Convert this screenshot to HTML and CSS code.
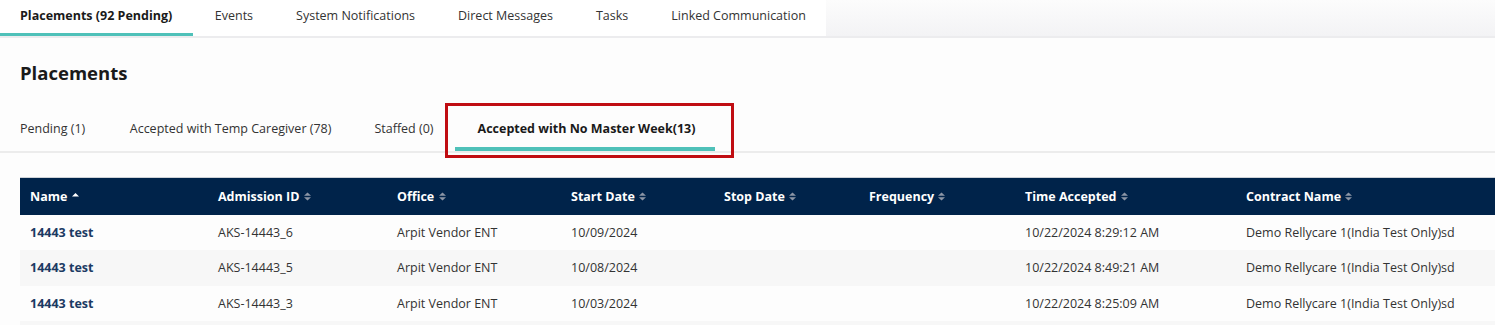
FILE: index.html
```html
<!DOCTYPE html>
<html>
<head>
<meta charset="utf-8">
<link rel="stylesheet" href="styles.css">
</head>
<body>
<div class="topbar">
  <nav class="toptabs">
    <a class="toptab active">Placements (92 Pending)</a>
    <a class="toptab">Events</a>
    <a class="toptab">System Notifications</a>
    <a class="toptab">Direct Messages</a>
    <a class="toptab">Tasks</a>
    <a class="toptab">Linked Communication</a>
  </nav>
  <div class="topfill"></div>
</div>
<main class="content">
  <h1 class="title">Placements</h1>
  <nav class="subtabs">
    <a class="subtab">Pending (1)</a>
    <a class="subtab">Accepted with Temp Caregiver (78)</a>
    <a class="subtab">Staffed (0)</a>
    <a class="subtab active">Accepted with No Master Week(13)</a>
  </nav>
  <table class="grid">
    <colgroup>
      <col style="width:188px"><col style="width:179px"><col style="width:174px"><col style="width:153px"><col style="width:145px"><col style="width:156px"><col style="width:221px"><col>
    </colgroup>
    <thead>
      <tr>
        <th>Name <span class="sort"><svg width="7" height="9" viewBox="0 0 7 9"><path d="M0 4.5 L3.5 1 L7 4.5 Z" fill="#fff"/></svg></span></th>
        <th>Admission ID <span class="sort"><svg width="7" height="9" viewBox="0 0 7 9"><path d="M0 3.8 L3.5 0.5 L7 3.8 Z M0 5.2 L3.5 8.5 L7 5.2 Z" fill="#8c96a6"/></svg></span></th>
        <th>Office <span class="sort"><svg width="7" height="9" viewBox="0 0 7 9"><path d="M0 3.8 L3.5 0.5 L7 3.8 Z M0 5.2 L3.5 8.5 L7 5.2 Z" fill="#8c96a6"/></svg></span></th>
        <th>Start Date <span class="sort"><svg width="7" height="9" viewBox="0 0 7 9"><path d="M0 3.8 L3.5 0.5 L7 3.8 Z M0 5.2 L3.5 8.5 L7 5.2 Z" fill="#8c96a6"/></svg></span></th>
        <th>Stop Date <span class="sort"><svg width="7" height="9" viewBox="0 0 7 9"><path d="M0 3.8 L3.5 0.5 L7 3.8 Z M0 5.2 L3.5 8.5 L7 5.2 Z" fill="#8c96a6"/></svg></span></th>
        <th>Frequency <span class="sort"><svg width="7" height="9" viewBox="0 0 7 9"><path d="M0 3.8 L3.5 0.5 L7 3.8 Z M0 5.2 L3.5 8.5 L7 5.2 Z" fill="#8c96a6"/></svg></span></th>
        <th>Time Accepted <span class="sort"><svg width="7" height="9" viewBox="0 0 7 9"><path d="M0 3.8 L3.5 0.5 L7 3.8 Z M0 5.2 L3.5 8.5 L7 5.2 Z" fill="#8c96a6"/></svg></span></th>
        <th>Contract Name <span class="sort"><svg width="7" height="9" viewBox="0 0 7 9"><path d="M0 3.8 L3.5 0.5 L7 3.8 Z M0 5.2 L3.5 8.5 L7 5.2 Z" fill="#8c96a6"/></svg></span></th>
      </tr>
    </thead>
    <tbody>
      <tr>
        <td><a class="link">14443 test</a></td><td>AKS-14443_6</td><td>Arpit Vendor ENT</td><td>10/09/2024</td><td></td><td></td><td>10/22/2024 8:29:12 AM</td><td>Demo Rellycare 1(India Test Only)sd</td>
      </tr>
      <tr>
        <td><a class="link">14443 test</a></td><td>AKS-14443_5</td><td>Arpit Vendor ENT</td><td>10/08/2024</td><td></td><td></td><td>10/22/2024 8:49:21 AM</td><td>Demo Rellycare 1(India Test Only)sd</td>
      </tr>
      <tr>
        <td><a class="link">14443 test</a></td><td>AKS-14443_3</td><td>Arpit Vendor ENT</td><td>10/03/2024</td><td></td><td></td><td>10/22/2024 8:25:09 AM</td><td>Demo Rellycare 1(India Test Only)sd</td>
      </tr>
      <tr>
        <td></td><td></td><td></td><td></td><td></td><td></td><td></td><td></td>
      </tr>
    </tbody>
  </table>
</main>
</body>
</html>
```

FILE: styles.css
```css
* { box-sizing: border-box; }
html, body { margin: 0; padding: 0; }
body {
  font-family: "Open Sans", "Noto Sans", Arial, sans-serif;
  font-size: 12.5px;
  line-height: 17px;
  color: #333;
  background: #fdfdfd;
  width: 1495px;
  height: 325px;
  overflow: hidden;
}
.topbar {
  display: flex;
  height: 38px;
  border-bottom: 2px solid #ececee;
}
.toptabs {
  display: flex;
  background: #fff;
  width: 826px;
  height: 36px;
}
.topfill {
  flex: 1;
  background: linear-gradient(#fcfcfc, #f3f3f5);
}
.toptab {
  display: block;
  padding: 7px 21.5px 0 21.5px;
  height: 36px;
  color: #333;
  white-space: nowrap;
}
.toptab.active {
  font-weight: 700;
  color: #1a1a1a;
  border-bottom: 3px solid #4fc1b9;
  padding-left: 20px;
  padding-right: 21px;
}
.title {
  margin: 0;
  padding: 22px 20px 0 20px;
  font-size: 18.5px;
  font-weight: 700;
  color: #1a1a1a;
  line-height: 25px;
  height: 65px;
}
.subtabs {
  display: flex;
  align-items: flex-end;
  border-bottom: 2px solid #ececec;
  height: 50px;
  padding-left: 20px;
}
.subtab {
  display: block;
  padding: 0 0 14px 0;
  white-space: nowrap;
  color: #333;
}
.subtab:nth-child(1) { margin-right: 44.5px; }
.subtab:nth-child(2) { margin-right: 43px; }
.subtab:nth-child(3) { margin-right: 21px; }
.subtab.active {
  position: relative;
  font-weight: 700;
  color: #1a1a1a;
  padding: 0 20px 10px 23px;
  border-bottom: 4px solid #4fc1b9;
}
.subtab.active::after {
  content: "";
  position: absolute;
  left: -10px;
  right: -19px;
  top: -17px;
  bottom: -11px;
  border: 3px solid #c00d12;
}
.grid {
  margin: 24px 0 0 20px;
  width: 1500px;
  border-collapse: collapse;
  table-layout: fixed;
}
.grid th {
  background: #00234a;
  color: #fff;
  font-weight: 700;
  text-align: left;
  height: 37px;
  padding: 0 10px;
  white-space: nowrap;
  border-top: 1px solid #cfd3d8;
}
.sort { display: inline-block; margin-left: 1px; }
.sort svg { display: block; }
.grid td {
  height: 35.5px;
  padding: 0 10px;
  white-space: nowrap;
  color: #333;
}
.grid tbody tr:nth-child(even) td { background: #f7f7f7; }
.link { color: #1c3a63; font-weight: 700; }
```
